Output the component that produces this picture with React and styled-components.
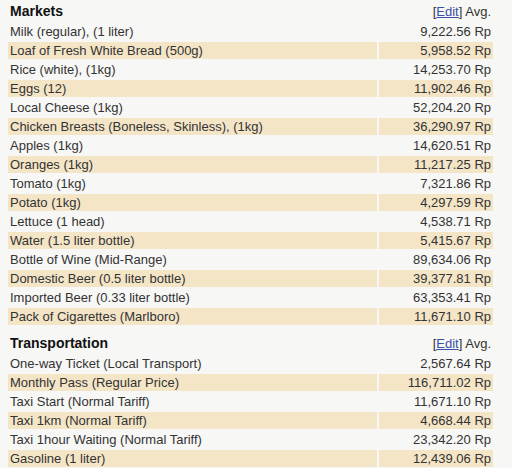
import React from 'react';
import styled, { createGlobalStyle } from 'styled-components';

const GlobalStyle = createGlobalStyle`
  body {
    margin: 0;
    background: #f7f7f5;
    font-family: "Liberation Sans", Arial, sans-serif;
    color: #333;
  }
`;

const sections = [
  {
    title: 'Markets',
    items: [
      ['Milk (regular), (1 liter)', '9,222.56'],
      ['Loaf of Fresh White Bread (500g)', '5,958.52'],
      ['Rice (white), (1kg)', '14,253.70'],
      ['Eggs (12)', '11,902.46'],
      ['Local Cheese (1kg)', '52,204.20'],
      ['Chicken Breasts (Boneless, Skinless), (1kg)', '36,290.97'],
      ['Apples (1kg)', '14,620.51'],
      ['Oranges (1kg)', '11,217.25'],
      ['Tomato (1kg)', '7,321.86'],
      ['Potato (1kg)', '4,297.59'],
      ['Lettuce (1 head)', '4,538.71'],
      ['Water (1.5 liter bottle)', '5,415.67'],
      ['Bottle of Wine (Mid-Range)', '89,634.06'],
      ['Domestic Beer (0.5 liter bottle)', '39,377.81'],
      ['Imported Beer (0.33 liter bottle)', '63,353.41'],
      ['Pack of Cigarettes (Marlboro)', '11,671.10'],
    ],
  },
  {
    title: 'Transportation',
    items: [
      ['One-way Ticket (Local Transport)', '2,567.64'],
      ['Monthly Pass (Regular Price)', '116,711.02'],
      ['Taxi Start (Normal Tariff)', '11,671.10'],
      ['Taxi 1km (Normal Tariff)', '4,668.44'],
      ['Taxi 1hour Waiting (Normal Tariff)', '23,342.20'],
      ['Gasoline (1 liter)', '12,439.06'],
    ],
  },
];

const Page = styled.div`
  padding-left: 6px;
`;

const PriceTable = styled.table`
  width: 489px;
  border-collapse: separate;
  border-spacing: 2px;
  font-size: 13px;
  & + & {
    margin-top: 5px;
  }
`;

const HeadCell = styled.th`
  height: 19px;
  padding: 0 2px;
  line-height: 19px;
  text-align: ${(p) => (p.$right ? 'right' : 'left')};
  font-weight: ${(p) => (p.$right ? 'normal' : 'bold')};
  font-size: ${(p) => (p.$right ? '13px' : '14px')};
  color: ${(p) => (p.$right ? '#333' : '#111')};
  width: ${(p) => (p.$right ? '110px' : 'auto')};
`;

const EditLink = styled.a`
  color: #3a4fa8;
  text-decoration: underline;
`;

const Row = styled.tr`
  background: ${(p) => (p.$odd ? '#f4e5c7' : 'transparent')};
`;

const Cell = styled.td`
  height: 17px;
  padding: 0 2px;
  line-height: 17px;
  white-space: nowrap;
  text-align: ${(p) => (p.$right ? 'right' : 'left')};
`;

const App = () => (
  <>
    <GlobalStyle />
    <Page>
      {sections.map((s) => (
        <PriceTable key={s.title}>
          <thead>
            <tr>
              <HeadCell>{s.title}</HeadCell>
              <HeadCell $right>
                [<EditLink href="#">Edit</EditLink>] Avg.
              </HeadCell>
            </tr>
          </thead>
          <tbody>
            {s.items.map(([name, price], i) => (
              <Row key={name} $odd={i % 2 === 1}>
                <Cell>{name}</Cell>
                <Cell $right>{price} Rp</Cell>
              </Row>
            ))}
          </tbody>
        </PriceTable>
      ))}
    </Page>
  </>
);

export default App;
